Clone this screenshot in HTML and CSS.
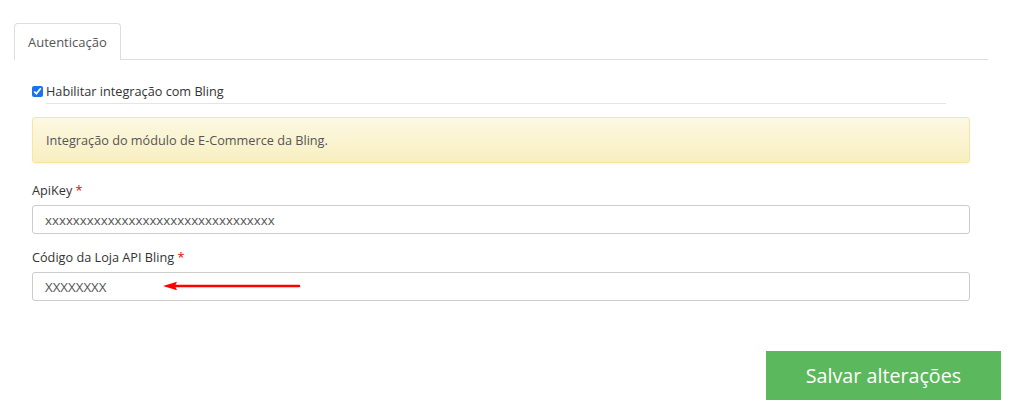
FILE: index.html
```html
<!DOCTYPE html>
<html lang="pt">
<head>
<meta charset="utf-8">
<link rel="stylesheet" href="styles.css">
</head>
<body>
<div class="page">
  <div class="tabs">
    <div class="tab">Autenticação</div>
  </div>
  <div class="pane">
    <div class="check-row">
      <label class="check-label"><input type="checkbox" checked> Habilitar integração com Bling</label>
    </div>
    <div class="alert">Integração do módulo de E-Commerce da Bling.</div>
    <div class="field field-first">
      <div class="label">ApiKey <span class="req">*</span></div>
      <div class="input">xxxxxxxxxxxxxxxxxxxxxxxxxxxxxxxxx</div>
    </div>
    <div class="field">
      <div class="label">Código da Loja API Bling <span class="req">*</span></div>
      <div class="input">XXXXXXXX
        <svg class="arrow" width="140" height="10" viewBox="0 0 140 10"><path d="M12 5 H136" stroke="#f00" stroke-width="2.6" stroke-linecap="round"/><path d="M0 5 L14 0.8 L12 5 L14 9.2 Z" fill="#f00"/></svg>
      </div>
    </div>
  </div>
  <div class="actions">
    <button class="btn-save">Salvar alterações</button>
  </div>
</div>
</body>
</html>
```

FILE: styles.css
```css
html, body { margin: 0; padding: 0; background: #fff; }
body { font-family: "Open Sans", "Liberation Sans", sans-serif; font-size: 12.7px; color: #333; }
.page { padding-top: 23px; }
.tabs { margin-left: 14px; width: 974px; border-bottom: 1px solid #ddd; display: flex; }
.tab {
  border: 1px solid #ddd; border-bottom: none; border-radius: 4px 4px 0 0;
  padding: 0 13px; height: 36px; line-height: 37px; color: #555; background: #fff; font-size: 13px;
  margin-bottom: -1px; width: 79px;
}
.pane { padding: 0 43px 0 32px; }
.check-row { padding-top: 21px; }
.check-label { display: flex; align-items: center; height: 20px; }
.check-label input { margin: 0 3px 0 0; width: 11px; height: 11px; accent-color: #1a73e8; }
.check-row::after { content: ""; display: block; margin: 2px 0 0 14px; width: 900px; border-bottom: 1px solid #e5e5e5; }
.alert {
  margin-top: 13px; height: 46px; box-sizing: border-box; padding: 0 13px; display: flex; align-items: center;
  border: 1px solid #f5e79e; border-radius: 3px;
  background: linear-gradient(#fcf8e3, #f8efc0);
  box-shadow: 0 1px 2px rgba(0,0,0,.05);
  color: #555;
}
.field { margin-top: 13px; }
.field-first { margin-top: 17px; }
.label { line-height: 20px; margin-bottom: 5px; color: #333; }
.req { color: #e00; }
.input {
  position: relative; height: 29px; box-sizing: border-box; border: 1px solid #ccc; border-radius: 3px;
  padding: 0 12px; display: flex; align-items: center; color: #555; font-size: 13.3px;
}
.arrow { position: absolute; left: 130px; top: 8px; }
.actions { display: flex; justify-content: flex-end; padding: 50px 12px 0 0; }
.btn-save {
  width: 235px; height: 49px; background: #5cb85c; color: #fff; border: none; border-radius: 0;
  font-family: "Open Sans", "Liberation Sans", sans-serif; font-size: 19.7px; padding: 0;
}
```
